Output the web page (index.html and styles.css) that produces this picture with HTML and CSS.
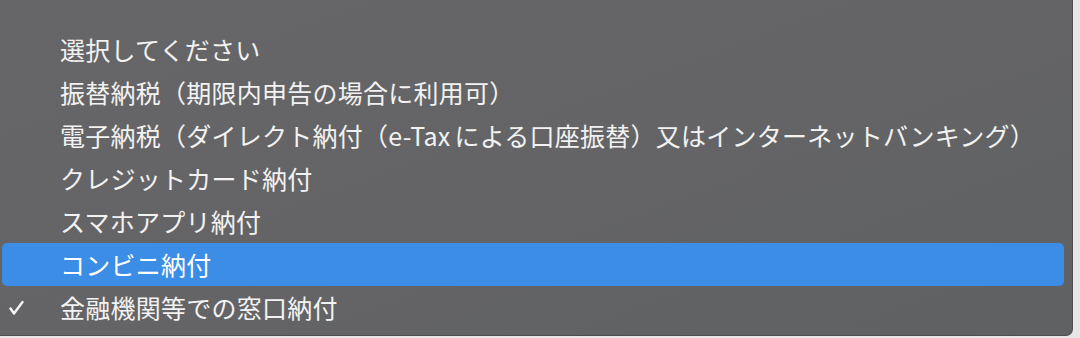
FILE: index.html
```html
<!DOCTYPE html>
<html lang="ja">
<head>
<meta charset="utf-8">
<link rel="stylesheet" href="styles.css">
</head>
<body>
<div class="menu">
  <ul class="list">
    <li class="item">選択してください</li>
    <li class="item">振替納税（期限内申告の場合に利用可）</li>
    <li class="item">電子納税（ダイレクト納付（e-Tax<span class="gap"></span>による口座振替）又はインターネットバンキング）</li>
    <li class="item">クレジットカード納付</li>
    <li class="item">スマホアプリ納付</li>
    <li class="item active">コンビニ納付</li>
    <li class="item checked">
      <svg class="check" width="16" height="16" viewBox="0 0 16 16"><path d="M1.5 8.5 L5 13.5 L13.5 2" fill="none" stroke="#f4f4f4" stroke-width="2.4" stroke-linecap="round" stroke-linejoin="round"/></svg>
      金融機関等での窓口納付
    </li>
  </ul>
</div>
</body>
</html>
```

FILE: styles.css
```css
html, body {
  margin: 0;
  padding: 0;
}
body {
  width: 1080px;
  height: 338px;
  background: #e6e6e6;
  overflow: hidden;
  font-family: "Noto Sans CJK JP", "Noto Sans", sans-serif;
}
.menu {
  width: 1072px;
  height: 335px;
  background: linear-gradient(160deg, #666668 0%, #646466 55%, #5f6162 100%);
  border-right: 1px solid #4e4e50;
  border-bottom: 1px solid #4e4e50;
  border-bottom-right-radius: 7px;
  box-sizing: content-box;
  overflow: hidden;
}
.list {
  list-style: none;
  margin: 0;
  padding: 28px 8px 0 2px;
}
.item {
  position: relative;
  height: 43px;
  display: flex;
  align-items: center;
  padding-left: 58px;
  font-size: 25px;
  line-height: 43px;
  letter-spacing: 0.25px;
  color: #f2f2f2;
  border-radius: 5px;
  white-space: nowrap;
}
.gap {
  display: inline-block;
  width: 4px;
}
.item.active {
  background: #3b8de6;
  color: #ffffff;
}
.check {
  position: absolute;
  left: 7px;
  top: 14px;
}
```
